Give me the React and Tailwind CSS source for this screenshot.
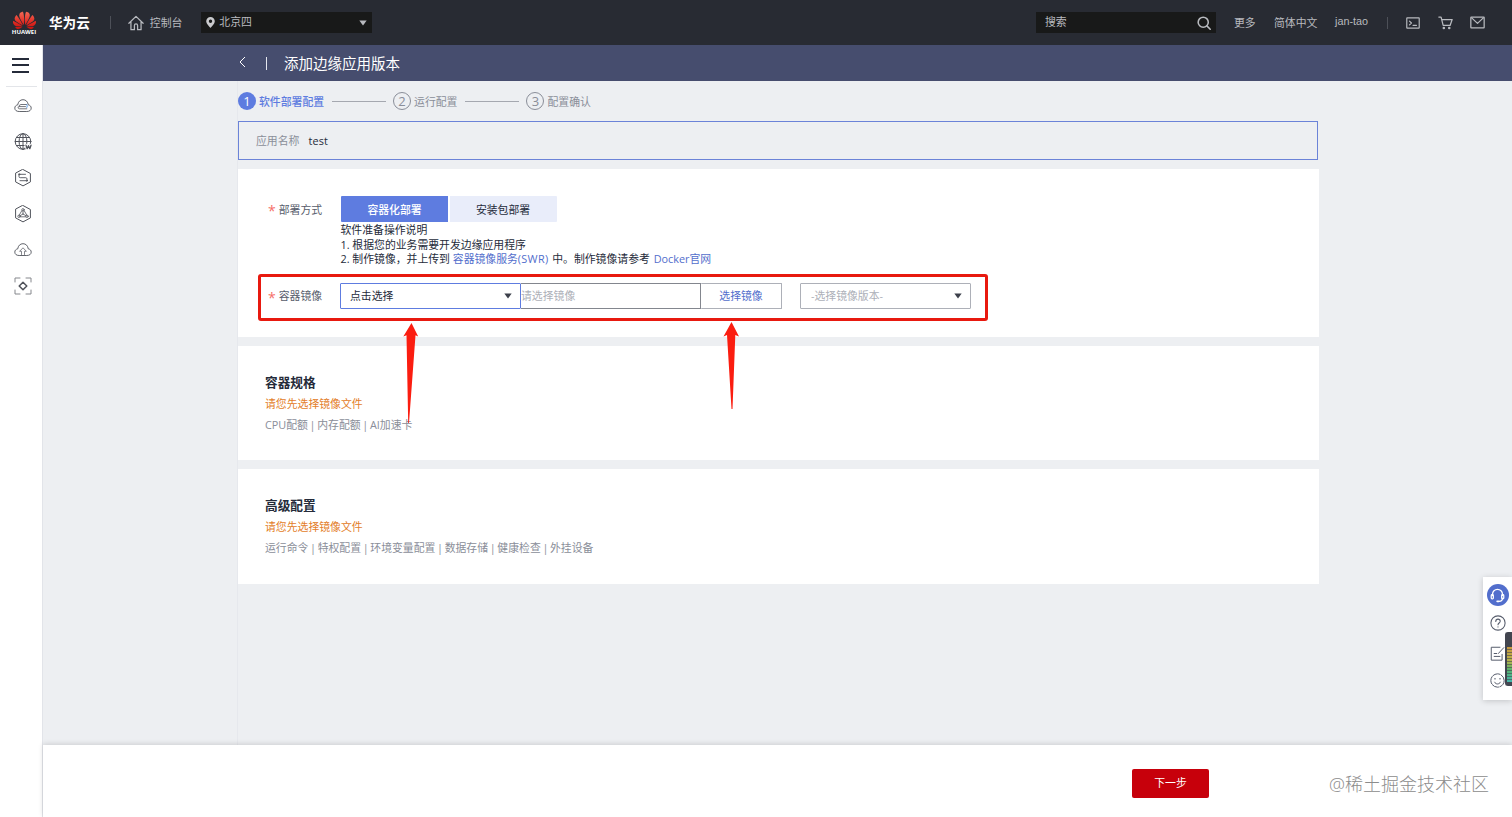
import React from "react";
import { SiHuawei } from "react-icons/si";

const Caret = ({ className }) => (
  <svg className={className} width="8" height="6" viewBox="0 0 8 6" fill="currentColor">
    <path d="M0.3 0.6h7.4L4 5.6z" />
  </svg>
);

const Icon = ({ children, size = 18, sw = 1, className = "" }) => (
  <svg
    className={className}
    width={size}
    height={size}
    viewBox="0 0 18 18"
    fill="none"
    stroke="currentColor"
    strokeWidth={sw}
    strokeLinecap="round"
    strokeLinejoin="round"
  >
    {children}
  </svg>
);

const CLOUD = "M4.800 14.500C2.400 14.500 .8 13.100 .8 11.100c0-1.800 1.300-3 2.900-3.200C4.200 4.600 6.200 2.700 9 2.700s4.800 1.900 5.300 5.200c1.600.2 2.900 1.400 2.900 3.200 0 2-1.600 3.400-4 3.400z";
const HEX = "M9 0.500l7.400 4v8.400L9 16.900l-7.400-4V4.500z";

const sideIcons = [
  <Icon key="server" sw={0.9}>
    <path d={CLOUD} />
    <path d="M12.500 7.500H7a2 2 0 0 0-2 2M12.800 11.800H5.500a1.500 1.500 0 0 1-1.500-1.500M5 9.600h6.500" strokeWidth="0.8" />
    <path d="M12.800 7.600c.6.800.6 2.200 0 3" stroke="#4a90e2" />
  </Icon>,
  <Icon key="globe" sw={1}>
    <circle cx="9" cy="8.500" r="7.800" />
    <ellipse cx="9" cy="8.500" rx="3.900" ry="7.800" />
    <path d="M1.200 8.500h15.600M2.500 4.500h13M2.500 12.500h9M9 0.700v15.600" />
    <path d="M12 12.200l1.200 3.500 1.300-3 1.300 3 1.200-3.500" stroke="#fff" strokeWidth="3" />
    <path d="M12 12.200l1.200 3.500 1.300-3 1.300 3 1.200-3.500" strokeWidth="1.300" />
  </Icon>,
  <Icon key="flow" sw={1}>
    <path d={HEX} />
    <path d="M6 5.300h5.500M5 5.800v1.700c0 .8.400 1.200 1.200 1.200h5.600c.8 0 1.200.4 1.200 1.200v1.300M6 11.700h6" strokeWidth="0.9" />
    <circle cx="5.200" cy="5.300" r="0.6" />
    <circle cx="12.800" cy="11.700" r="0.6" />
  </Icon>,
  <Icon key="mesh" sw={1}>
    <path d={HEX} />
    <circle cx="9" cy="4.800" r="1.200" strokeWidth="0.8" />
    <circle cx="5" cy="11.300" r="1.200" strokeWidth="0.8" />
    <circle cx="13" cy="11.300" r="1.200" strokeWidth="0.8" />
    <path d="M9 6v3M9 9l-2.900 1.700M9 9l2.900 1.700M7.800 5.700L5.300 10M10.200 5.700l2.500 4.300M6.300 11.800h5.400" strokeWidth="0.8" />
  </Icon>,
  <Icon key="upload" sw={0.9}>
    <path d={CLOUD} />
    <path d="M7.500 13.500v-3.200H5.600L9 6.800l3.400 3.500h-1.900v3.200" strokeWidth="0.7" />
  </Icon>,
  <Icon key="scan" sw={1}>
    <path d="M1 5V1h5M12 1h5v4M17 13v4h-5M6 17H1v-4" stroke="#85878c" />
    <path d="M9 5.200L12.800 9 9 12.800 5.200 9z" strokeWidth="1.500" />
  </Icon>,
];

const Step = ({ n, label, active }) => (
  <div className="flex items-center">
    {active ? (
      <span className="flex size-[18px] items-center justify-center rounded-full bg-[#5e7ce0] text-[13px] leading-none text-white">{n}</span>
    ) : (
      <span className="flex size-[18px] items-center justify-center rounded-full border border-[#8a8e99] text-[13px] leading-none text-[#8a8e99]">{n}</span>
    )}
    <span className={active ? "ml-[3px] pr-px pt-px font-medium text-[#5e7ce0]" : "ml-[3px] pr-px pt-px text-[#8a8e99]"}>{label}</span>
  </div>
);

const Label = ({ children }) => (
  <div className="flex w-[73px] shrink-0 items-center pt-px text-[#575d6c]">
    <span className="mr-[3px] h-[15px] text-[14px] leading-[17px] text-[#f66f6a]">*</span>
    {children}
  </div>
);

const Summary = ({ title, text, className }) => (
  <section className={`flex flex-col bg-white pl-[27px] pt-[27px] ${className}`}>
    <h2 className="text-[12.700px] font-bold leading-[18px] text-[#252b3a]">{title}</h2>
    <p className="mt-[5px] leading-[16px] text-[#e37d29]">请您先选择镜像文件</p>
    <p className="mt-[5px] leading-[16px] text-[#8a8e99] [word-spacing:-1.150px]">{text}</p>
  </section>
);

const TopBar = () => (
  <header className="flex h-[45px] shrink-0 items-center bg-[#282b33] text-[#b8babf]">
    <div className="ml-[12px] flex w-[24px] flex-col items-center">
      <svg width="0" height="0" className="absolute">
        <linearGradient id="petal" x1="0" y1="0" x2="0" y2="1">
          <stop offset="0.1" stopColor="#f0604e" />
          <stop offset="0.6" stopColor="#e02a22" />
          <stop offset="1" stopColor="#c4120f" />
        </linearGradient>
      </svg>
      <SiHuawei size={23} className="-mb-[3px] fill-[url(#petal)]" />
      <span className="text-[6px] font-bold leading-[7px] text-white">HUAWEI</span>
    </div>
    <span className="ml-[13px] text-[13.600px] font-bold text-white">华为云</span>
    <span className="ml-[20px] h-[13px] w-px bg-[#4d5058]" />
    <Icon size={16} sw={1.4} className="ml-[17px]">
      <path d="M1 9.300L9 1.500l8 7.800M3.300 7.500v9h3.900v-4.700c0-2.300 3.600-2.300 3.600 0v4.700h3.900v-9" />
    </Icon>
    <span className="ml-[6px]">控制台</span>
    <div className="ml-[19px] flex h-[21px] w-[171px] items-center bg-[#181919] pl-[5px] pr-[5px]">
      <svg width="9" height="11" viewBox="0 0 9 11" fill="#c9cacd">
        <path fillRule="evenodd" d="M4.500 0A4.300 4.300 0 0 0 .2 4.300C.2 7 4.500 11 4.500 11s4.300-4 4.300-6.700A4.300 4.300 0 0 0 4.500 0zm0 2.600a1.700 1.700 0 1 1 0 3.400 1.700 1.700 0 0 1 0-3.400z" />
      </svg>
      <span className="ml-[4px] pb-px">北京四</span>
      <Caret className="ml-auto" />
    </div>
    <div className="ml-auto flex h-[21px] w-[180px] items-center justify-between bg-[#181919] pl-[9px] pr-[5px]">
      <span className="pb-px">搜索</span>
      <Icon size={14} sw={2}>
        <circle cx="8" cy="8" r="6.500" />
        <path d="M13 13l4 4" />
      </Icon>
    </div>
    <span className="ml-[18px] w-[40px]">更多</span>
    <span className="w-[61px]">简体中文</span>
    <span className="w-[52px] pb-[3px] font-['Liberation_Sans'] text-[10.800px]">jan-tao</span>
    <span className="h-[12px] w-px bg-[#4d5058]" />
    <Icon size={14} sw={1.500} className="ml-[18px]">
      <rect x="1" y="2.500" width="16" height="13" rx="0.5" />
      <path d="M4.500 6.500L7 9l-2.500 2.500M9 12h4.500" />
    </Icon>
    <Icon size={15} sw={1.500} className="ml-[18px]">
      <path d="M1 2.500h2.700l2.500 10h8.300L17 5.500H4.500" />
      <circle cx="7" cy="15.500" r="0.8" />
      <circle cx="13.500" cy="15.500" r="0.8" />
    </Icon>
    <Icon size={15} sw={1.500} className="ml-[17px] mr-[27px]">
      <rect x="1" y="2.500" width="16" height="13" rx="0.5" />
      <path d="M2 3.500l7 6.500 7-6.500" />
    </Icon>
  </header>
);

const SideBar = () => (
  <nav className="flex w-[43px] shrink-0 flex-col items-center border-r border-[#e2e4e9] bg-white text-[#50535b]">
    <div className="flex h-[42px] w-[31px] items-center justify-center border-b border-[#e3e5e9] pr-[2px] pb-px">
      <div className="flex h-[15px] w-[17px] flex-col justify-between">
        <span className="h-[2px] bg-[#252b3a]" />
        <span className="h-[2px] bg-[#252b3a]" />
        <span className="h-[2px] bg-[#252b3a]" />
      </div>
    </div>
    <div className="mt-[10px] flex flex-col gap-[18px] pl-[3px]">{sideIcons}</div>
  </nav>
);

const FloatingTools = () => (
  <aside className="absolute right-0 top-[577px] flex h-[123px] w-[29px] flex-col items-center bg-white pt-[7px] text-[#575d6c] shadow-[0_1px_6px_rgba(0,0,0,0.18)]">
    <span className="flex size-[22px] items-center justify-center rounded-full bg-[#526ecc] text-white">
      <Icon size={15} sw={1.500}>
        <path d="M3 9V7.500a6 6 0 0 1 12 0V9M15 12c0 2.500-1.500 4-4 4" />
        <rect x="1.500" y="8" width="2.500" height="5" rx="1" />
        <rect x="14" y="8" width="2.500" height="5" rx="1" />
        <path d="M8.500 16h2" strokeWidth="2" />
      </Icon>
    </span>
    <Icon size={16} sw={1.200} className="mt-[9px]">
      <circle cx="9" cy="9" r="8" />
      <path d="M6.500 7.200C6.500 3.700 11.500 3.900 11.500 7c0 2-2.500 2-2.500 4M9 13.200v.3" />
    </Icon>
    <Icon size={15} sw={1.200} className="mt-[15px]">
      <path d="M14.500 10v7H1.500V1.500H12M5 12.500h7M5 9h3M10 9l6.500-7" />
    </Icon>
    <Icon size={15} sw={1.200} className="mt-[12px]">
      <circle cx="9" cy="9" r="8" strokeDasharray="9 1.500" />
      <path d="M5.500 11c1.500 3 5.500 3 7 0M5.500 7h1M11.500 7h1" />
    </Icon>
    <div className="absolute -right-px top-[55px] h-[54px] w-[8px] rounded-l-[3px] border-2 border-r-0 border-[#42454f] bg-[#42454f] pt-[13px]">
      <div className="h-[35px] bg-[repeating-linear-gradient(to_bottom,transparent_0_2px,#42454f99_2px_3px),linear-gradient(to_bottom,#c9983f,#b5b44a_40%,#57b36d_65%,#45b5ad)]" />
    </div>
  </aside>
);

export default function App() {
  return (
    <div className="relative flex h-[817px] w-[1512px] flex-col overflow-hidden bg-[#edeff2] font-['Open_Sans','Noto_Sans_CJK_SC',sans-serif] text-[10.850px] leading-[16px] text-[#252b3a]">
      <TopBar />
      <div className="flex min-h-0 flex-1">
        <SideBar />
        <div className="flex min-w-0 flex-1 flex-col">
          <div className="flex h-[36px] shrink-0 items-center bg-[#464d6e] pl-[195px] text-white">
            <svg width="8" height="12" viewBox="0 0 8 12" fill="none" stroke="currentColor" className="-mt-[2px]">
              <path d="M7 1L2 6l5 5" />
            </svg>
            <span className="ml-[20px] h-[13px] w-px bg-[#e4e6ee]" />
            <h1 className="ml-[17px] pt-px text-[14.500px] leading-[20px]">添加边缘应用版本</h1>
          </div>

          <main className="ml-[194px] flex w-[1082px] flex-1 flex-col border-l border-[#e6e8ed]">
            <div className="flex h-[40px] items-center">
              <Step n={1} label="软件部署配置" active />
              <span className="ml-[7px] mr-[7px] h-px w-[54px] bg-[#a5a8b0]" />
              <Step n={2} label="运行配置" />
              <span className="ml-[7px] mr-[7px] h-px w-[54px] bg-[#a5a8b0]" />
              <Step n={3} label="配置确认" />
            </div>
            <div className="flex h-[39px] w-[1080px] items-center border border-[#6b83d8] pl-[17px]">
              <span className="text-[#8a8e99]">应用名称</span>
              <span className="ml-[9px] tracking-[0.15px]">test</span>
            </div>

            <section className="mt-[9px] flex h-[168px] flex-col bg-white pl-[30px] pt-[27px]">
              <div className="flex h-[26px]">
                <Label>部署方式</Label>
                <button className="w-[107px] rounded-l-[1px] bg-[#5e7ce0] pt-px font-medium text-white">容器化部署</button>
                <button className="ml-[2px] w-[107px] rounded-r-[1px] bg-[#e9edfa] pr-px pt-px">安装包部署</button>
              </div>
              <div className="-mb-px ml-[72.500px] pt-px leading-[14.500px]">
                <p>软件准备操作说明</p>
                <p>1. 根据您的业务需要开发边缘应用程序</p>
                <p>
                  2. 制作镜像，并上传到 <a className="text-[#526ecc]">容器镜像服务<span className="tracking-[0.3px]">(SWR)</span></a>
                  <span className="ml-px"> 中。制作镜像请参考 </span>
                  <a className="ml-px text-[#526ecc]">Docker官网</a>
                </p>
              </div>
              <div className="mt-[17px] flex h-[26px]">
                <Label>容器镜像</Label>
                <div className="-ml-px flex w-[181px] items-center justify-between rounded-[1px] border border-[#5e7ce0] pl-[9px] pr-[8px]">
                  点击选择
                  <Caret className="text-[#3c404b]" />
                </div>
                <div className="flex w-[180px] items-center border border-l-0 border-[#83868e] text-[#adb0b8]">请选择镜像</div>
                <button className="w-[81px] rounded-[1px] border border-l-0 border-[#adb0b8] text-[#526ecc]">选择镜像</button>
                <div className="ml-[18px] flex w-[171px] items-center justify-between rounded-[1px] border border-[#adb0b8] pl-[10px] pr-[8px] text-[#adb0b8]">
                  -选择镜像版本-
                  <Caret className="text-[#3c404b]" />
                </div>
              </div>
            </section>

            <Summary className="mt-[9px] h-[114px]" title="容器规格" text="CPU配额 | 内存配额 | AI加速卡" />
            <Summary
              className="mt-[9px] h-[115px]"
              title="高级配置"
              text="运行命令 | 特权配置 | 环境变量配置 | 数据存储 | 健康检查 | 外挂设备"
            />
          </main>

          <footer className="flex h-[72px] shrink-0 items-center bg-white pl-[1089px] pt-[4px] shadow-[0_-1px_5px_rgba(0,0,0,0.14)]">
            <button className="h-[29px] w-[77px] rounded-[2px] bg-[#c7000b] text-white">下一步</button>
            <span className="ml-[120px] pt-[2px] text-[18px] font-light leading-[24px] text-[#8c8c8c]">@稀土掘金技术社区</span>
          </footer>
        </div>
      </div>

      <div className="absolute left-[258px] top-[274px] h-[47px] w-[730px] rounded-[3px] border-3 border-[#e8190f]" />
      <svg className="absolute left-[400px] top-[320px]" width="345" height="106" viewBox="0 0 345 106" fill="#fb1d10">
        <path d="M11.500 3L18.200 16.500 15.500 15.300 9 103H8.200L6.500 15.300 3.300 16.500z" />
        <path d="M331.500 2L339 16.500 335.300 15 332.500 89H331.500L327 15 323.500 16.500z" />
      </svg>
      <FloatingTools />
    </div>
  );
}
